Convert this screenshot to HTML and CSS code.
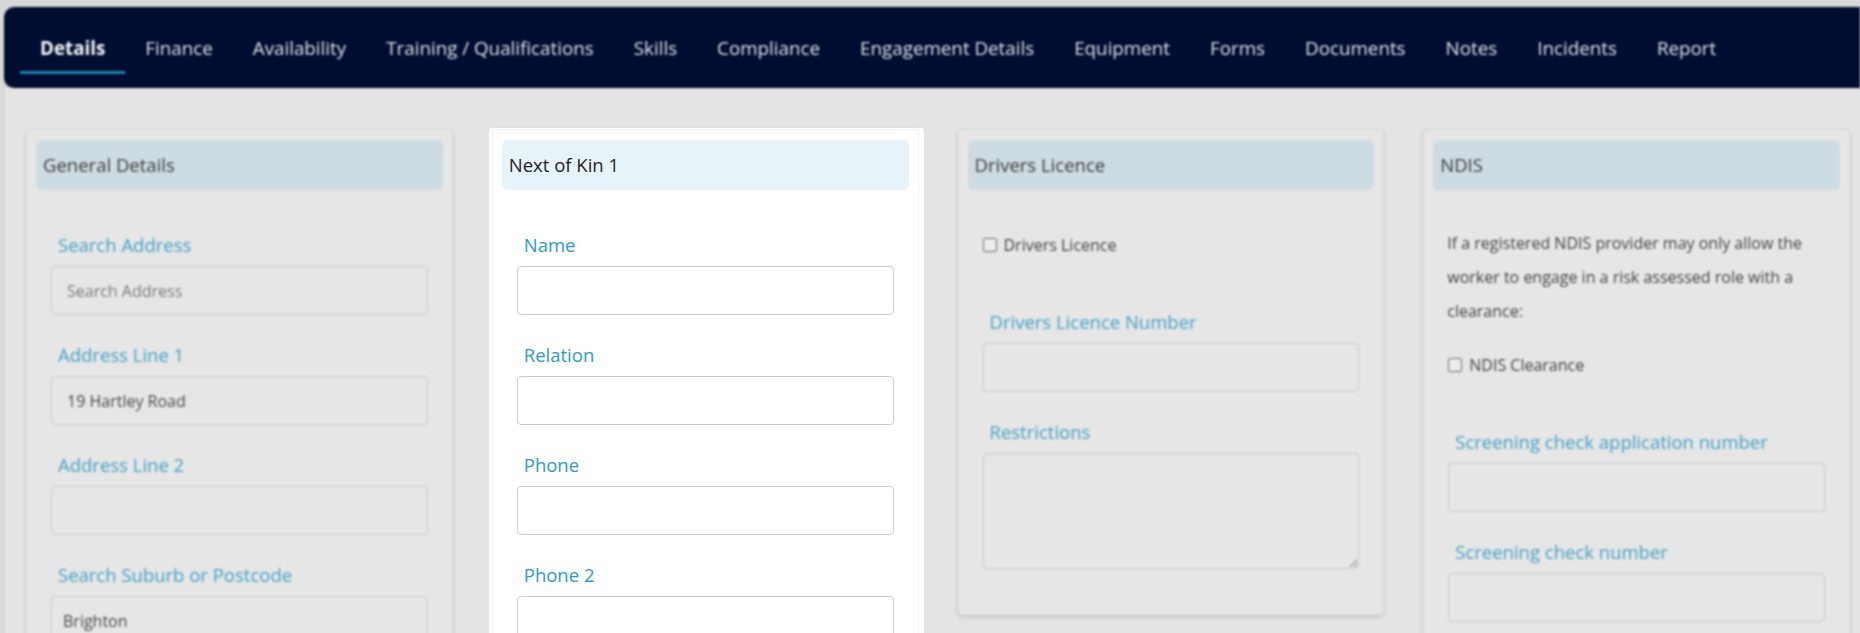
FILE: index.html
```html
<!DOCTYPE html>
<html lang="en">

<head>
    <meta charset="UTF-8">
    <meta name="viewport" content="width=device-width, initial-scale=1.0">
    <title>Worker Details</title>
    <link rel="stylesheet" href="styles.css">
</head>

<body>
    <nav class="tabs dim">
        <a class="tab active">Details</a>
        <a class="tab">Finance</a>
        <a class="tab">Availability</a>
        <a class="tab">Training / Qualifications</a>
        <a class="tab">Skills</a>
        <a class="tab">Compliance</a>
        <a class="tab">Engagement Details</a>
        <a class="tab">Equipment</a>
        <a class="tab">Forms</a>
        <a class="tab">Documents</a>
        <a class="tab">Notes</a>
        <a class="tab">Incidents</a>
        <a class="tab">Report</a>
    </nav>

    <main class="panels">
        <section class="card dim">
            <h3 class="card-title">General Details</h3>
            <div class="card-body">
                <div class="field">
                    <label>Search Address</label>
                    <input type="text" placeholder="Search Address">
                </div>
                <div class="field">
                    <label>Address Line 1</label>
                    <input type="text" value="19 Hartley Road">
                </div>
                <div class="field">
                    <label>Address Line 2</label>
                    <input type="text">
                </div>
                <div class="field">
                    <label>Search Suburb or Postcode</label>
                    <input class="select" type="text" value="Brighton">
                </div>
            </div>
        </section>

        <section class="card focus">
            <h3 class="card-title">Next of Kin 1</h3>
            <div class="card-body">
                <div class="field">
                    <label>Name</label>
                    <input type="text">
                </div>
                <div class="field">
                    <label>Relation</label>
                    <input type="text">
                </div>
                <div class="field">
                    <label>Phone</label>
                    <input type="text">
                </div>
                <div class="field">
                    <label>Phone 2</label>
                    <input type="text">
                </div>
            </div>
        </section>

        <section class="card dim">
            <h3 class="card-title">Drivers Licence</h3>
            <div class="card-body">
                <label class="check"><input type="checkbox"> Drivers Licence</label>
                <div class="field">
                    <label>Drivers Licence Number</label>
                    <input type="text">
                </div>
                <div class="field">
                    <label>Restrictions</label>
                    <textarea></textarea>
                </div>
            </div>
        </section>

        <section class="card dim">
            <h3 class="card-title">NDIS</h3>
            <div class="card-body">
                <p class="note">If a registered NDIS provider may only allow the worker to engage in a risk assessed role with a clearance:</p>
                <label class="check"><input type="checkbox"> NDIS Clearance</label>
                <div class="field">
                    <label>Screening check application number</label>
                    <input type="text">
                </div>
                <div class="field">
                    <label>Screening check number</label>
                    <input type="text">
                </div>
            </div>
        </section>
    </main>
</body>

</html>
```

FILE: styles.css
```css
*{
    margin: 0;
    padding: 0;
    box-sizing: border-box;
}
body{
    width: 100vw;
    height: 100vh;
    overflow: hidden;
    padding-top: 7px;
    background-color: #d8d8d8;
    font-family: "Open Sans", "Noto Sans", sans-serif;
}

/* blurred, greyed parts behind the highlighted card */
.dim{
    filter: blur(1.2px);
}

/* top tab bar */
.tabs{
    display: flex;
    align-items: flex-start;
    height: 81px;
    margin-left: 4px;
    padding-left: 16px;
    border-radius: 10px 0 0 10px;
    background-color: #010d30;
}
.tab{
    padding: 28px 20px 10px;
    border-bottom: 3px solid transparent;
    font-size: 18.8px;
    line-height: 26px;
    color: #dde2ea;
    white-space: nowrap;
}
.tab.active{
    font-weight: 700;
    color: #f4f6f9;
    border-bottom-color: #1d80b1;
}

/* four card columns */
.panels{
    display: grid;
    grid-template-columns: repeat(4, 1fr);
    gap: 39px;
    align-items: start;
    margin-left: 5px;
    padding: 41px 10px 0 21px;
    height: 100%;
    background-color: #e4e4e4;
}
.card{
    padding: 10px 9px;
    border: 1px solid #d8d8d8;
    border-radius: 4px;
    background-color: #e6e6e6;
    box-shadow: 0px 2px 5px rgba(0, 0, 0, 0.14);
}
.card-title{
    height: 50px;
    padding-left: 7px;
    border-radius: 6px;
    font-size: 18.5px;
    font-weight: 400;
    line-height: 50px;
    color: #3b3b3b;
    background-color: #cddce2;
}
.card-body{
    padding: 42px 15px 8px;
}
.field{
    margin-bottom: 27px;
}
.field label{
    display: block;
    padding-left: 7px;
    margin-bottom: 8px;
    font-size: 18.5px;
    line-height: 26px;
    color: #45a2c4;
}
input[type="text"], textarea{
    display: block;
    width: 100%;
    height: 49px;
    padding: 0 15px;
    border: 1px solid #cacaca;
    border-radius: 4px;
    font-family: inherit;
    font-size: 16px;
    color: #4a4a4a;
    background-color: #e6e6e6;
}
input::placeholder{
    color: #7b7b7b;
}
input.select{
    padding-left: 11px;
}
textarea{
    height: 116px;
    padding: 8px 15px;
}

.check{
    display: flex;
    align-items: center;
    gap: 7px;
    margin-bottom: 51px;
    font-size: 16px;
    line-height: 26px;
    color: #444;
}
.check input{
    appearance: none;
    width: 14px;
    height: 14px;
    border: 1px solid #6e6e6e;
    border-radius: 2px;
    background-color: #ececec;
}
.note{
    margin: -6px 0 24px -1px;
    font-size: 16px;
    line-height: 34px;
    color: #444;
}

/* the card picked out by the tour: sharp and white */
.focus{
    border-color: #f2f2f2;
    border-radius: 2px;
    background-color: #fff;
    box-shadow: -2px 0 0 1px #fff, 4px 0 0 1px #fff, 1px 1px 3px 2px rgba(0, 0, 0, 0.05);
}
.focus .card-title{
    color: #1f1f1f;
    background-color: #e6f4fa;
}
.focus .field label{
    color: #2d9ac6;
}
.focus input[type="text"]{
    border-color: #cccccc;
    background-color: #fff;
}
```
